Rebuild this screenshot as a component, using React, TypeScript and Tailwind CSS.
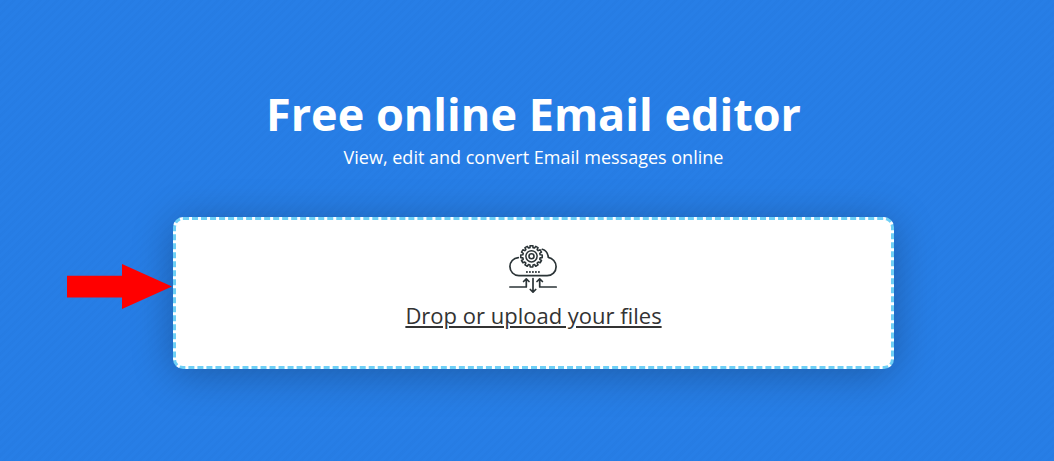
import React from "react";

const teeth = Array.from({ length: 12 }, (_, i) => i * 30);

function gearPath(cx: number, cy: number, inner: number, outer: number) {
  const points: string[] = [];
  for (const deg of teeth) {
    for (const [offset, r] of [[-10, inner], [-7, outer], [7, outer], [10, inner]]) {
      const a = ((deg + offset) * Math.PI) / 180;
      points.push(`${(cx + r * Math.sin(a)).toFixed(2)} ${(cy - r * Math.cos(a)).toFixed(2)}`);
    }
  }
  return `M${points.join("L")}Z`;
}

function CloudUploadIcon() {
  return (
    <svg
      className="h-12 w-[50px]"
      viewBox="0 0 50 48"
      fill="none"
      stroke="#2b3437"
      strokeWidth="1.7"
      strokeLinecap="round"
      strokeLinejoin="round"
      aria-hidden="true"
    >
      <path d="M9.300 12.700C4.300 13 0.900 17 0.900 21.600c0 5 4 9.100 9 9.100h28.200c5 0 9-4 9-9 0-4.800-3.600-8.500-7.800-9.300C38.900 8 36.500 5.200 33.300 4.300" />
      <path d={gearPath(22.500, 11.300, 8.800, 10.800)} strokeWidth="1.6" />
      <circle cx="22.500" cy="11.300" r="5.600" strokeWidth="1.5" />
      <circle cx="22.500" cy="11.300" r="2.500" strokeWidth="1.6" />
      <path d="M17 27h1.800M20 27h1.800M23 27h1.800M26 27h1.800M29 27h1.800" stroke="#4a5255" strokeWidth="1.8" strokeLinecap="butt" />
      <path d="M0.800 42H17.300V34M14.600 36.500 17.300 33.800 20 36.500M47.200 42H30.700V34M28 36.500 30.700 33.800 33.400 36.500M24 33.500V47M21.300 44.500 24 47.200 26.700 44.500" />
    </svg>
  );
}

function PointerArrow() {
  return (
    <svg
      className="pointer-events-none absolute top-[47px] right-full mr-px h-[46px] w-[105px]"
      viewBox="0 0 105 46"
      aria-hidden="true"
    >
      <path d="M0 11.700H55V0L105 22.500 55 45V33.500H0Z" fill="#ff0000" />
    </svg>
  );
}

export default function App() {
  return (
    <main className="flex min-h-screen flex-col items-center bg-[#277ee6] bg-[repeating-linear-gradient(135deg,transparent_0px,transparent_3px,rgba(0,40,110,0.02)_3px,rgba(0,40,110,0.02)_6px)] pt-[84px] pb-12 pl-[13px] font-['Open_Sans',sans-serif] text-white">
      <h1 className="text-center text-[45px] leading-[60px] font-bold">Free online Email editor</h1>
      <p className="text-center text-lg leading-[26px]">View, edit and convert Email messages online</p>
      <div className="relative mt-[47px] w-full max-w-[721px]">
        <label
          htmlFor="email-files"
          className="flex cursor-pointer flex-col items-center rounded-[10px] border-[3px] border-dashed border-[#6dcff6] bg-white pt-[25px] pb-9 text-[#333333] shadow-[0_5px_40px_rgba(0,0,0,0.27)]"
        >
          <CloudUploadIcon />
          <span className="mt-2 text-[22px] leading-[29px] underline">Drop or upload your files</span>
        </label>
        <input id="email-files" type="file" multiple className="sr-only" />
        <PointerArrow />
      </div>
    </main>
  );
}
